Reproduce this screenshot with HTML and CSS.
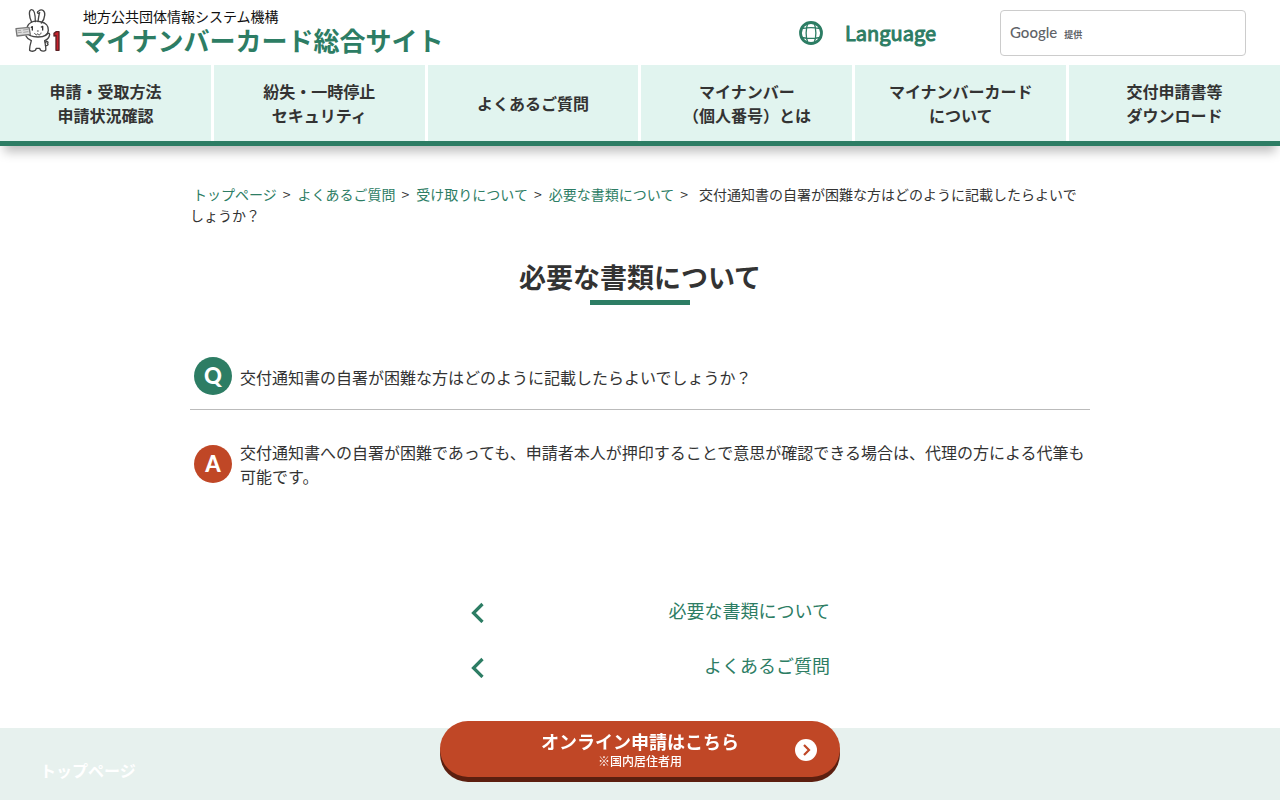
FILE: index.html
```html
<!DOCTYPE html>
<html lang="ja">
<head>
<meta charset="utf-8">
<meta name="viewport" content="width=device-width, initial-scale=1">
<title>必要な書類について</title>
<link rel="stylesheet" href="styles.css">
</head>
<body>
<header class="header">
  <a class="brand" href="#">
    <svg class="brand-mark" viewBox="27 24 138 135" fill="none" stroke="#444" stroke-width="4" stroke-linecap="round" stroke-linejoin="round" aria-hidden="true">
      <path d="M77 67C69 50 67 29 77 29C86 29 88 47 88 65M96 65C98 51 99 42 101 38C95 43 91 37 98 33C108 25 118 33 116 46C115 57 111 64 106 69"/>
      <path d="M77 66C65 73 60 84 63 97C67 108 80 111 96 111C114 111 126 105 127 91C128 77 118 68 106 66C96 63 85 63 77 66Z"/>
      <path d="M30 86L69 82L73 103L33 108Z" fill="#ddd" stroke="#777"/>
      <path d="M36 92L44 91M36 98L46 97M52 90L66 88M53 97L66 95" stroke="#888" stroke-width="2"/>
      <path d="M76 82L79 80V90M106 81L110 79V90" stroke="#333"/>
      <path d="M94 93L97 93M86 100C89 107 94 105 95 101C98 107 104 105 105 99" stroke="#444" stroke-width="3"/>
      <path d="M60 108C63 115 70 120 76 122C73 132 70 143 71 151C76 154 84 154 88 151L91 145H101L104 151C108 154 116 154 119 151C121 143 117 131 116 122C124 119 130 111 131 103C130 98 124 99 120 105M119 127C123 121 129 127 124 131C129 133 124 139 118 136"/>
      <path d="M144 100L151 95H159V151H150V106L144 108Z" fill="#c8202b" stroke="#5c2024" stroke-width="4"/>
    </svg>
    <span class="brand-text">
      <span class="brand-org">地方公共団体情報システム機構</span>
      <span class="brand-name">マイナンバーカード総合サイト</span>
    </span>
  </a>
  <div class="tools">
    <a class="language" href="#">
      <svg class="globe" viewBox="0 0 24 24" fill="none" stroke="#2d7d64" aria-hidden="true">
        <circle cx="12" cy="12" r="10.500" stroke-width="2.800"/>
        <path d="M9 2C6.500 7 6.500 17 9 22M15 2C17.500 7 17.500 17 15 22M3 7.500C8 6.500 16 6.500 21 7.500M3 16.500C8 17.500 16 17.500 21 16.500" stroke-width="1.300"/>
      </svg>
      <span>Language</span>
    </a>
    <form class="search">
      <label class="search-label" for="q"><span class="search-brand">Google</span> <span class="search-by">提供</span></label>
      <input class="search-input" id="q" type="text">
    </form>
  </div>
</header>
<nav class="nav">
  <a class="nav-item" href="#">申請・受取方法<br>申請状況確認</a>
  <a class="nav-item" href="#">紛失・一時停止<br>セキュリティ</a>
  <a class="nav-item" href="#">よくあるご質問</a>
  <a class="nav-item" href="#">マイナンバー<br>（個人番号）とは</a>
  <a class="nav-item" href="#">マイナンバーカード<br>について</a>
  <a class="nav-item" href="#">交付申請書等<br>ダウンロード</a>
</nav>
<main class="main">
  <div class="crumbs"><a href="#">トップページ</a><span class="sep">&gt;</span><a href="#">よくあるご質問</a><span class="sep">&gt;</span><a href="#">受け取りについて</a><span class="sep">&gt;</span><a href="#">必要な書類について</a><span class="sep">&gt;</span><span class="crumb-current">交付通知書の自署が困難な方はどのように記載したらよいでしょうか？</span></div>
  <h1 class="title">必要な書類について</h1>
  <div class="qa question">
    <span class="badge badge-q">Q</span>
    <p class="qa-text">交付通知書の自署が困難な方はどのように記載したらよいでしょうか？</p>
  </div>
  <div class="qa answer">
    <span class="badge badge-a">A</span>
    <p class="qa-text">交付通知書への自署が困難であっても、申請者本人が押印することで意思が確認できる場合は、代理の方による代筆も可能です。</p>
  </div>
  <div class="back-links">
    <a class="back-link" href="#"><svg class="chevron" viewBox="0 0 14 24" aria-hidden="true"><path d="M12.500 5L3.500 14L12.500 23" fill="none" stroke="#2d7d64" stroke-width="3.200"/></svg><span>必要な書類について</span></a>
    <a class="back-link" href="#"><svg class="chevron" viewBox="0 0 14 24" aria-hidden="true"><path d="M12.500 5L3.500 14L12.500 23" fill="none" stroke="#2d7d64" stroke-width="3.200"/></svg><span>よくあるご質問</span></a>
  </div>
</main>
<footer class="footer"><a class="footer-link" href="#">トップページ</a></footer>
<a class="cta" href="#">
  <span class="cta-main">オンライン申請はこちら</span>
  <span class="cta-note">※国内居住者用</span>
  <svg class="cta-icon" viewBox="0 0 24 24" aria-hidden="true"><circle cx="12" cy="12" r="11" fill="#fff"/><path d="M10 7L15 12L10 17" fill="none" stroke="#c04726" stroke-width="2.200"/></svg>
</a>
</body>
</html>
```
FILE: styles.css
```css
* { box-sizing: border-box; }

body {
  display: flex;
  flex-direction: column;
  min-height: 100vh;
  margin: 0;
  background: #fff;
  color: #333;
  font: 16px/24px "Noto Sans CJK JP", sans-serif;
}

a { color: #2d7d64; text-decoration: none; }

.header {
  display: flex;
  justify-content: space-between;
  align-items: center;
  height: 65px;
  padding: 0 34px 0 15px;
}

.brand { display: flex; align-items: center; gap: 19px; padding-bottom: 4px; }
.brand-mark { width: 46px; height: 45px; }
.brand-text { display: flex; flex-direction: column; }
.brand-org { padding-left: 3px; color: #111; font-size: 14px; line-height: 18px; }
.brand-name { font-size: 26px; font-weight: 700; line-height: 30px; }

.tools { display: flex; align-items: center; gap: 64px; }
.language { display: flex; align-items: center; gap: 22px; font-size: 20px; -webkit-text-stroke: 1px #2d7d64; }
.globe { width: 24px; height: 24px; }

.search {
  display: flex;
  align-items: center;
  width: 246px;
  height: 46px;
  padding: 2px 9px 0;
  border: 1px solid #ccc;
  border-radius: 4px;
}
.search-label { display: flex; align-items: baseline; gap: 7px; color: #5f6368; white-space: nowrap; }
.search-brand { font-family: Lato, sans-serif; font-size: 15px; font-weight: 500; }
.search-by { font-size: 9px; font-weight: 700; }
.search-input { flex: 1; min-width: 0; border: 0; background: transparent; outline: 0; }

.nav {
  display: grid;
  grid-template-columns: repeat(6, 1fr);
  gap: 3px;
  border-bottom: 5px solid #2d7d64;
  box-shadow: 0 10px 10px -4px rgba(0, 0, 0, 0.25);
}
.nav-item {
  display: flex;
  justify-content: center;
  align-items: center;
  min-height: 76px;
  background: #e1f4ef;
  color: #333;
  font-weight: 700;
  text-align: center;
}

.main { width: 100%; max-width: 900px; margin: 0 auto; padding: 38px 0 49px; }

.crumbs { font-size: 14px; line-height: 21px; }
.crumbs a { padding: 0 3px; }
.sep { padding: 0 4px 0 3px; }
.crumb-current { padding-left: 7px; }

.title { margin: 33px 0 52px; font-size: 27px; font-weight: 700; line-height: 36px; text-align: center; }
.title::after { content: ""; display: block; width: 100px; height: 5px; margin: 5px auto 0; background: #2d7d64; }

.qa { display: flex; align-items: center; gap: 8px; padding-left: 4px; }
.question { padding-bottom: 14px; border-bottom: 1px solid #bbb; }
.question .qa-text { padding-top: 2px; }
.answer { padding-top: 30px; }
.qa-text { flex: 1; margin: 0; }
.badge {
  display: flex;
  justify-content: center;
  align-items: center;
  width: 38px;
  height: 38px;
  border-radius: 50%;
  color: #fff;
  font-family: Lato, sans-serif;
  font-size: 22px;
  font-weight: 900;
}
.badge-q { background: #2d7d64; }
.badge-a { background: #c04726; }

.back-links { display: flex; flex-direction: column; gap: 28px; max-width: 400px; margin: 109px auto 0; }
.back-link { display: flex; justify-content: space-between; align-items: center; padding: 0 10px 0 30px; font-size: 18px; line-height: 27px; }
.chevron { width: 14px; height: 24px; }

.footer { flex: 1; padding: 30px 40px 18px; background: #e7f1ee; }
.footer-link { color: #fff; font-weight: 700; }

.cta {
  position: fixed;
  bottom: 23px;
  left: 50%;
  display: flex;
  flex-direction: column;
  justify-content: center;
  align-items: center;
  width: 400px;
  height: 56px;
  margin-left: -200px;
  border-radius: 28px;
  background: #c04726;
  box-shadow: 0 5px 0 #5c1f0f;
  color: #fff;
  font-weight: 700;
}
.cta-main { font-size: 18px; line-height: 24px; }
.cta-note { font-size: 12px; font-weight: 500; line-height: 16px; }
.cta-icon { position: absolute; top: 17px; right: 22px; width: 24px; height: 24px; }
```
